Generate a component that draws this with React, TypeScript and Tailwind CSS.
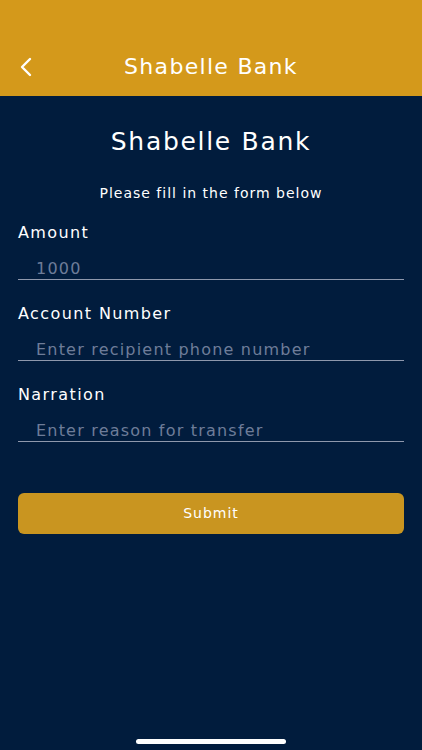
import { useState } from "react"

function Field({ label, placeholder, value, onChange }: { label: string; placeholder: string; value: string; onChange: (v: string) => void }) {
  return (
    <div className="flex flex-col">
      <label className="text-[16px] leading-[20px] text-white tracking-[1.4px]">{label}</label>
      <input
        type="text"
        value={value}
        onChange={(e) => onChange(e.target.value)}
        placeholder={placeholder}
        className="mt-[13px] h-[24px] w-full bg-transparent pl-[18px] pt-[2px] text-[16px] text-white tracking-[1.2px] placeholder:text-[#6e7c99] border-b-[1.5px] border-[#8f98ad] outline-none"
      />
    </div>
  )
}

export default function App() {
  const [amount, setAmount] = useState("")
  const [account, setAccount] = useState("")
  const [narration, setNarration] = useState("")

  return (
    <div className="w-[422px] h-[750px] bg-[#011c3d] flex flex-col font-['DejaVu_Sans',sans-serif]">
      <header className="h-[96px] bg-[#d4991b] flex items-end pb-[17px] px-[14px] relative">
        <button type="button" className="w-[24px] h-[24px] flex items-center justify-center">
          <svg width="16" height="20" viewBox="0 0 16 20" fill="none">
            <path d="M12 2 L4 10 L12 18" stroke="white" strokeWidth="2.4" strokeLinecap="round" strokeLinejoin="round" />
          </svg>
        </button>
        <h1 className="flex-1 text-center text-white text-[22px] leading-[24px] tracking-[1.3px] pr-[24px]">Shabelle Bank</h1>
      </header>

      <main className="flex-1 flex flex-col px-[18px]">
        <h2 className="mt-[31px] text-center text-white text-[25px] leading-[30px] tracking-[1.7px]">Shabelle Bank</h2>
        <p className="mt-[27px] text-center text-white text-[14px] leading-[18px] tracking-[1px]">Please fill in the form below</p>

        <div className="mt-[21px] flex flex-col gap-[24px]">
          <Field label="Amount" placeholder="1000" value={amount} onChange={setAmount} />
          <Field label="Account Number" placeholder="Enter recipient phone number" value={account} onChange={setAccount} />
          <Field label="Narration" placeholder="Enter reason for transfer" value={narration} onChange={setNarration} />
        </div>

        <button
          type="button"
          className="mt-[51px] h-[41px] w-full rounded-[6px] bg-[#c99520] text-white text-[14px] tracking-[1px]"
        >
          Submit
        </button>

        <div className="mt-auto mb-[6px] flex justify-center">
          <div className="w-[150px] h-[5px] rounded-full bg-white" />
        </div>
      </main>
    </div>
  )
}
